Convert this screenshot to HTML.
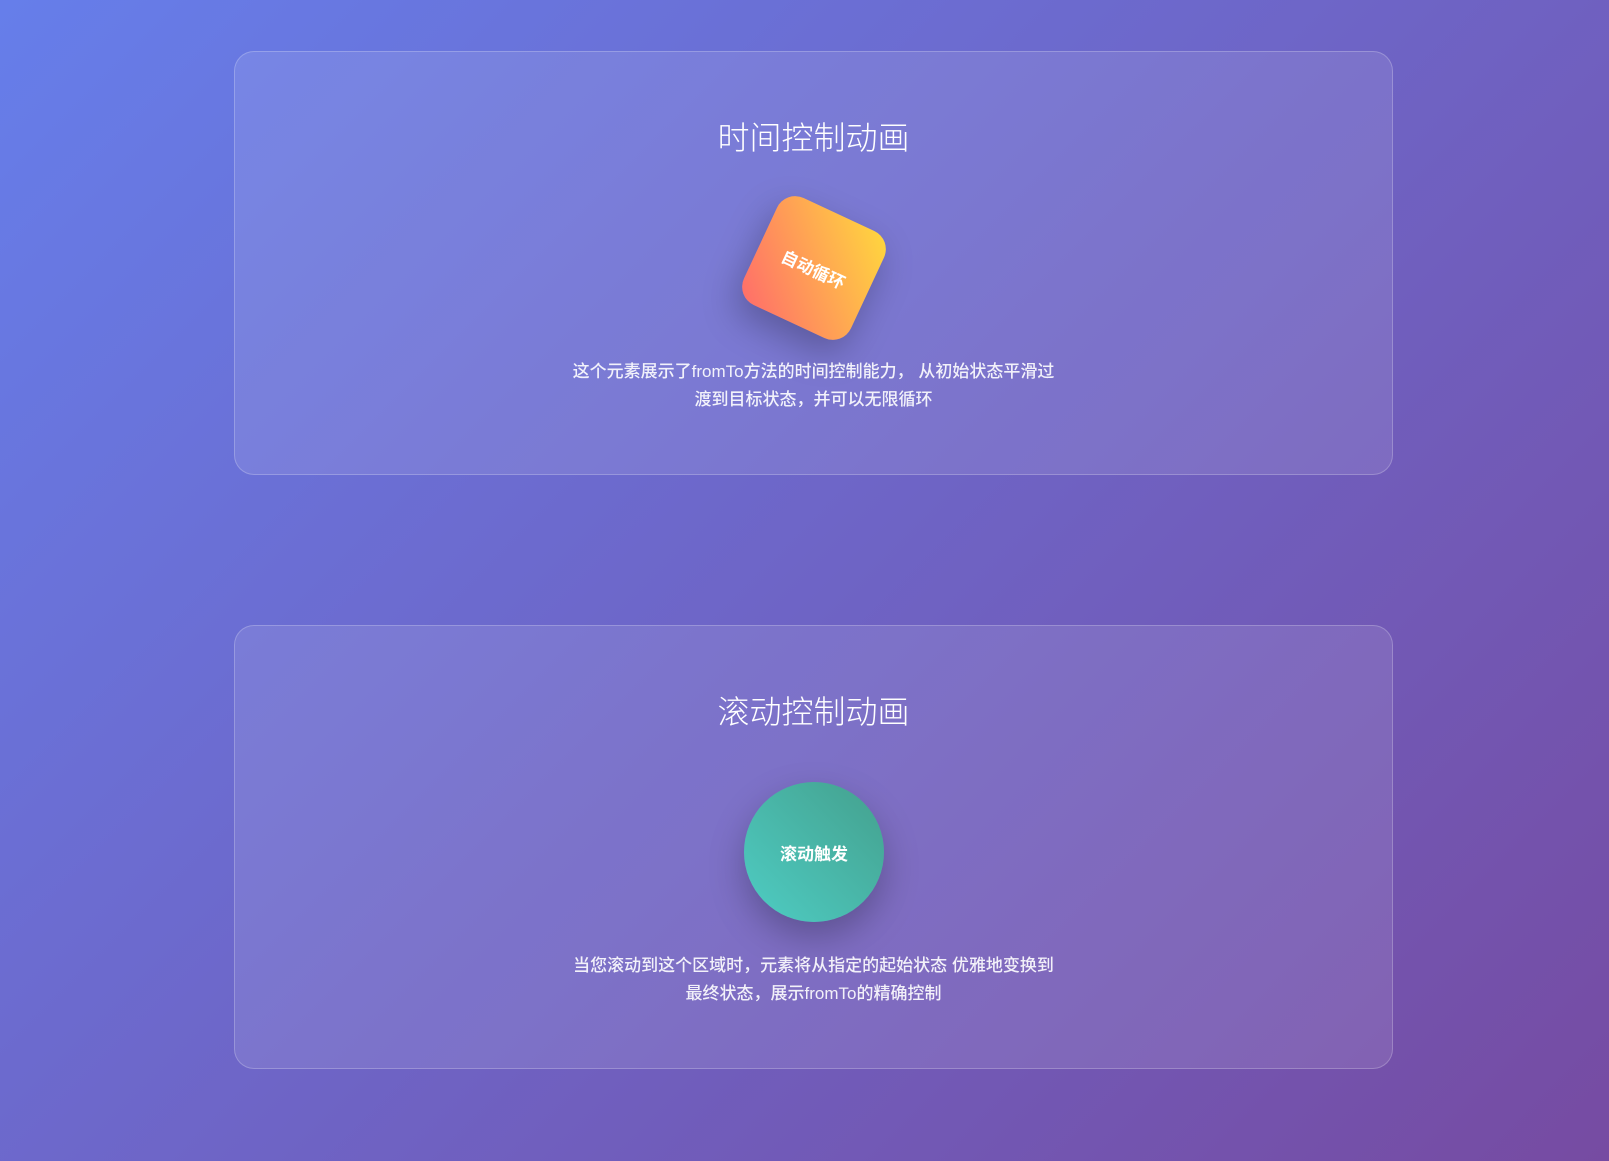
<!DOCTYPE html>
<html><head><meta charset="utf-8">
<style>
*{margin:0;padding:0;box-sizing:border-box}
html,body{width:1609px;height:1161px;overflow:hidden}
body{background:linear-gradient(135deg,#667eea 0%,#764ba2 100%);font-family:"Liberation Sans","Noto Sans CJK SC",sans-serif;color:#fff;position:relative}
.card{position:absolute;left:234px;width:1159px;background:rgba(255,255,255,0.1);border:1px solid rgba(255,255,255,0.22);border-radius:20px}
.t{position:absolute;left:0;right:0;text-align:center;font-size:32px;font-weight:300}
.p{position:absolute;left:0;right:0;margin:0 auto;width:490px;text-align:center;font-size:17px;line-height:28px;font-weight:500;color:rgba(255,255,255,0.9)}
.sq{position:absolute;width:118px;height:118px;border-radius:20px;background:linear-gradient(45deg,#ff6b6b,#ffd93d);transform:rotate(25deg);box-shadow:0 15px 35px rgba(0,0,0,0.25);display:flex;align-items:center;justify-content:center;font-weight:700;font-size:17px}
.ci{position:absolute;width:140px;height:140px;border-radius:50%;background:linear-gradient(45deg,#4ecdc4,#44a08d);box-shadow:0 15px 35px rgba(0,0,0,0.25);display:flex;align-items:center;justify-content:center;font-weight:700;font-size:17px}
</style></head><body>
<div class="card" style="top:51px;height:424px">
  <div class="t" style="top:61px">时间控制动画</div>
  <div class="sq" style="left:520px;top:157px">自动循环</div>
  <div class="p" style="top:306px">这个元素展示了fromTo方法的时间控制能力， 从初始状态平滑过渡到目标状态，并可以无限循环</div>
</div>
<div class="card" style="top:625px;height:444px">
  <div class="t" style="top:61px">滚动控制动画</div>
  <div class="ci" style="left:509px;top:156px">滚动触发</div>
  <div class="p" style="top:326px">当您滚动到这个区域时，元素将从指定的起始状态 优雅地变换到最终状态，展示fromTo的精确控制</div>
</div>
</body></html>
